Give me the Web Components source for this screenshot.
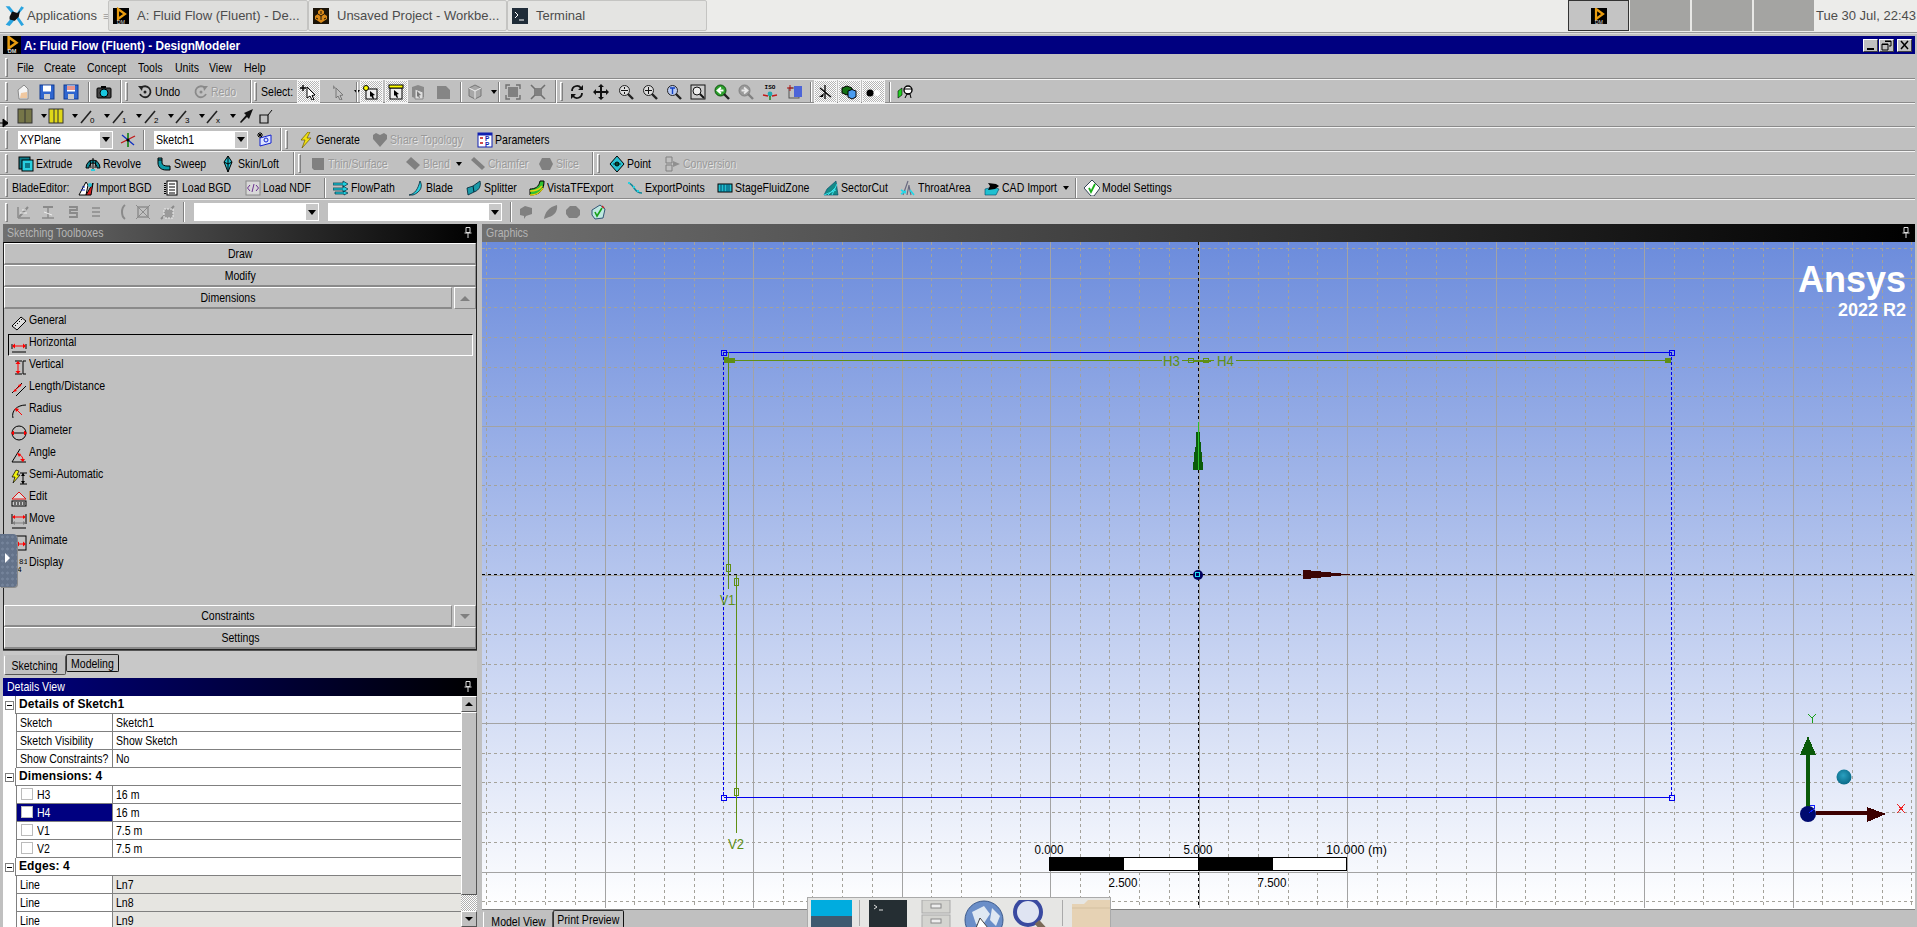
<!DOCTYPE html>
<html>
<head>
<meta charset="utf-8">
<title>DesignModeler</title>
<style>
html, body { margin: 0; height: 927px; overflow: hidden; background: #c0c0c0; }
body {
    position: relative;
    display: flex;
    flex-direction: column;
    font: 13px "Liberation Sans", sans-serif;
    color: #000;
}
</style>
</head>
<body>

<desk-panel>
    <task-button w="200" i="dm" active>A: Fluid Flow (Fluent) - De...</task-button>
    <task-button w="199" i="wb">Unsaved Project - Workbe...</task-button>
    <task-button w="200" i="term">Terminal</task-button>
</desk-panel>

<app-title>A: Fluid Flow (Fluent) - DesignModeler</app-title>

<tool-bar h="26">
    <tool-grip at="5"></tool-grip>
    <tool-item at="17">File</tool-item>
    <tool-item at="44">Create</tool-item>
    <tool-item at="87">Concept</tool-item>
    <tool-item at="138">Tools</tool-item>
    <tool-item at="175">Units</tool-item>
    <tool-item at="209">View</tool-item>
    <tool-item at="244">Help</tool-item>
</tool-bar>

<tool-bar>
    <tool-grip at="5"></tool-grip>
    <tool-item at="15" i="new"></tool-item>
    <tool-item at="39" i="save"></tool-item>
    <tool-item at="63" i="saveas"></tool-item>
    <tool-sep at="88"></tool-sep>
    <tool-item at="96" i="camera"></tool-item>
    <tool-end at="120"></tool-end>
    <tool-grip at="125"></tool-grip>
    <tool-item at="137" i="undo">Undo</tool-item>
    <tool-item at="193" i="redo" dis>Redo</tool-item>
    <tool-end at="250"></tool-end>
    <tool-grip at="254"></tool-grip>
    <tool-item at="261">Select:</tool-item>
    <tool-item at="297" i="pick" on></tool-item>
    <tool-item at="330" i="pick2" arrow></tool-item>
    <tool-sep at="356"></tool-sep>
    <tool-item at="360" i="vert" on></tool-item>
    <tool-item at="385" i="edge" on></tool-item>
    <tool-item at="410" i="faceg"></tool-item>
    <tool-item at="435" i="solidg"></tool-item>
    <tool-sep at="460"></tool-sep>
    <tool-item at="467" i="cubeg" arrow></tool-item>
    <tool-sep at="498"></tool-sep>
    <tool-item at="505" i="fit1"></tool-item>
    <tool-item at="530" i="fit2"></tool-item>
    <tool-end at="555"></tool-end>
    <tool-grip at="560"></tool-grip>
    <tool-item at="569" i="rotate"></tool-item>
    <tool-item at="593" i="pan"></tool-item>
    <tool-item at="618" i="zoom"></tool-item>
    <tool-item at="642" i="zoomp"></tool-item>
    <tool-item at="666" i="zoomt"></tool-item>
    <tool-item at="690" i="zoomb"></tool-item>
    <tool-item at="714" i="zback"></tool-item>
    <tool-item at="738" i="zfwd"></tool-item>
    <tool-item at="762" i="iso"></tool-item>
    <tool-item at="787" i="clip"></tool-item>
    <tool-sep at="810"></tool-sep>
    <tool-item at="814" i="axes" on></tool-item>
    <tool-item at="838" i="boxes" on></tool-item>
    <tool-item at="862" i="dots" on></tool-item>
    <tool-sep at="889"></tool-sep>
    <tool-item at="897" i="head"></tool-item>
</tool-bar>

<tool-bar>
    <tool-grip at="5"></tool-grip>
    <tool-item at="17" i="boxg" arrow></tool-item>
    <tool-item at="48" i="boxy" arrow></tool-item>
    <tool-item at="80" i="l0" arrow></tool-item>
    <tool-item at="112" i="l1" arrow></tool-item>
    <tool-item at="144" i="l2" arrow></tool-item>
    <tool-item at="175" i="l3" arrow></tool-item>
    <tool-item at="206" i="lx" arrow></tool-item>
    <tool-item at="238" i="pointer"></tool-item>
    <tool-item at="258" i="corner"></tool-item>
</tool-bar>

<tool-bar>
    <tool-grip at="5"></tool-grip>
    <tool-combo at="18" w="95">XYPlane</tool-combo>
    <tool-item at="120" i="axesrgb"></tool-item>
    <tool-sep at="143"></tool-sep>
    <tool-combo at="154" w="94">Sketch1</tool-combo>
    <tool-item at="257" i="sketchnew"></tool-item>
    <tool-end at="280"></tool-end>
    <tool-grip at="285"></tool-grip>
    <tool-item at="298" i="bolt">Generate</tool-item>
    <tool-item at="372" i="heart" dis>Share Topology</tool-item>
    <tool-item at="477" i="params">Parameters</tool-item>
</tool-bar>

<tool-bar>
    <tool-grip at="5"></tool-grip>
    <tool-item at="18" i="extrude">Extrude</tool-item>
    <tool-item at="85" i="revolve">Revolve</tool-item>
    <tool-item at="156" i="sweep">Sweep</tool-item>
    <tool-item at="220" i="skin">Skin/Loft</tool-item>
    <tool-end at="293"></tool-end>
    <tool-grip at="298"></tool-grip>
    <tool-item at="310" i="thin" dis>Thin/Surface</tool-item>
    <tool-item at="405" i="blend" dis arrow>Blend</tool-item>
    <tool-item at="470" i="chamfer" dis>Chamfer</tool-item>
    <tool-item at="538" i="slice" dis>Slice</tool-item>
    <tool-end at="592"></tool-end>
    <tool-grip at="597"></tool-grip>
    <tool-item at="609" i="point">Point</tool-item>
    <tool-item at="665" i="conv" dis>Conversion</tool-item>
</tool-bar>

<tool-bar>
    <tool-grip at="5"></tool-grip>
    <tool-item at="12">BladeEditor:</tool-item>
    <tool-item at="78" i="importb">Import BGD</tool-item>
    <tool-item at="164" i="loadb">Load BGD</tool-item>
    <tool-item at="245" i="ndf">Load NDF</tool-item>
    <tool-sep at="324"></tool-sep>
    <tool-item at="333" i="flow">FlowPath</tool-item>
    <tool-item at="408" i="blade">Blade</tool-item>
    <tool-item at="466" i="split">Splitter</tool-item>
    <tool-item at="529" i="vista">VistaTFExport</tool-item>
    <tool-item at="627" i="export">ExportPoints</tool-item>
    <tool-item at="717" i="stage">StageFluidZone</tool-item>
    <tool-item at="823" i="sector">SectorCut</tool-item>
    <tool-item at="900" i="throat">ThroatArea</tool-item>
    <tool-item at="984" i="cad" arrow>CAD Import</tool-item>
    <tool-sep at="1075"></tool-sep>
    <tool-item at="1084" i="check">Model Settings</tool-item>
</tool-bar>

<tool-bar last>
    <tool-grip at="5"></tool-grip>
    <tool-item at="16" i="d1"></tool-item>
    <tool-item at="40" i="d2"></tool-item>
    <tool-item at="65" i="d3"></tool-item>
    <tool-item at="88" i="d4"></tool-item>
    <tool-item at="115" i="d5"></tool-item>
    <tool-item at="135" i="d6"></tool-item>
    <tool-item at="160" i="d7"></tool-item>
    <tool-sep at="183"></tool-sep>
    <tool-combo at="194" w="125"></tool-combo>
    <tool-combo at="328" w="174"></tool-combo>
    <tool-sep at="510"></tool-sep>
    <tool-item at="518" i="g1"></tool-item>
    <tool-item at="543" i="g2"></tool-item>
    <tool-item at="565" i="g3"></tool-item>
    <tool-item at="590" i="g4"></tool-item>
</tool-bar>

<work-area>
    <div slot="left">
        <dock-header>Sketching Toolboxes</dock-header>
        <sketch-box>
            <box-head>Draw</box-head>
            <box-head>Modify</box-head>
            <box-head side="up">Dimensions</box-head>
            <box-rows slot="rows">
                <box-row i="general">General</box-row>
                <box-row i="horizontal" selected>Horizontal</box-row>
                <box-row i="vertical">Vertical</box-row>
                <box-row i="length">Length/Distance</box-row>
                <box-row i="radius">Radius</box-row>
                <box-row i="diameter">Diameter</box-row>
                <box-row i="angle">Angle</box-row>
                <box-row i="semi">Semi-Automatic</box-row>
                <box-row i="edit">Edit</box-row>
                <box-row i="move">Move</box-row>
                <box-row i="animate">Animate</box-row>
                <box-row i="display">Display</box-row>
            </box-rows>
            <box-head slot="foot" side="down">Constraints</box-head>
            <box-head slot="foot">Settings</box-head>
        </sketch-box>
        <tab-strip>
            <tab-item active w="62">Sketching</tab-item>
            <tab-item w="53">Modeling</tab-item>
        </tab-strip>
        <details-view>
            <detail-row group>Details of Sketch1</detail-row>
            <detail-row name="Sketch">Sketch1</detail-row>
            <detail-row name="Sketch Visibility">Show Sketch</detail-row>
            <detail-row name="Show Constraints?">No</detail-row>
            <detail-row group>Dimensions: 4</detail-row>
            <detail-row name="H3" check>16 m</detail-row>
            <detail-row name="H4" check selected>16 m</detail-row>
            <detail-row name="V1" check>7.5 m</detail-row>
            <detail-row name="V2" check>7.5 m</detail-row>
            <detail-row group>Edges: 4</detail-row>
            <detail-row name="Line" locked>Ln7</detail-row>
            <detail-row name="Line" locked>Ln8</detail-row>
            <detail-row name="Line" locked>Ln9</detail-row>
        </details-view>
    </div>
    <div slot="right">
        <dock-header>Graphics</dock-header>
        <graphics-view></graphics-view>
        <tab-strip bottom>
            <tab-item active w="70">Model View</tab-item>
            <tab-item w="71">Print Preview</tab-item>
        </tab-strip>
    </div>
</work-area>

<side-handle></side-handle>
<cursor-mark></cursor-mark>
<float-dock></float-dock>

<script>
// icons are all 16x16 boxes, scaled by whoever places them
const ICONS = {
    dm: '<rect width="16" height="16" fill="#000"/><path d="M5 1l7 5-7 5z" fill="none" stroke="#e89c10" stroke-width="2.2"/><text x="8" y="15.5" font-size="5" fill="#ddd" text-anchor="middle" font-family="Liberation Sans">DM</text>',
    wb: '<rect width="16" height="16" fill="#1c1408"/><path d="M8 1l3 2v3l3 2v3l-3 2-3 2-3-2-3-2V8l3-2V3z" fill="#d98a1a"/><path d="M8 3v3M5 6l3 2 3-2M8 8v4M3 10l2 1M13 10l-2 1" stroke="#1c1408" fill="none"/>',
    term: '<rect width="16" height="16" fill="#1f2c38"/><path d="M3 4l3 3-3 3" stroke="#fff" fill="none"/><path d="M7 12h5" stroke="#fff"/>',
    xfce: '<path d="M2 1l6 7-6 7 3 1 5-6 4 6 2-1-5-7 5-6-2-1-4 6-5-6z" fill="#2aa4e0"/><path d="M5 9l2-4 4 1 2-2-1 5-3 3-4-1z" fill="#111"/>',
    new: '<path d="M3 6l6-5 4 4v10H4z" fill="#f4f4f4" stroke="#8a8a8a"/><path d="M6 9l6-1v6H5z" fill="#f0c8a0"/>',
    save: '<rect x="1" y="1" width="14" height="14" fill="#2f66d0" stroke="#123a90"/><rect x="4" y="1.5" width="8" height="6" fill="#fff"/><rect x="5" y="10" width="6" height="5" fill="#ccc"/>',
    saveas: '<rect x="1" y="1" width="14" height="14" fill="#2f66d0" stroke="#123a90"/><rect x="4" y="1.5" width="8" height="6" fill="#fff"/><path d="M4 3h8M4 5h8" stroke="#d03020"/><rect x="5" y="10" width="6" height="5" fill="#ccc"/>',
    camera: '<rect x="1" y="4" width="14" height="10" rx="1" fill="#444" stroke="#000"/><rect x="5" y="2" width="5" height="2" fill="#000"/><circle cx="8" cy="9" r="4" fill="#18c8e0" stroke="#000"/>',
    undo: '<path d="M4 4a5.5 5.5 0 1 1-1 6" fill="none" stroke="#222" stroke-width="1.8"/><path d="M1 2l5 0-1 5z" fill="#222"/><circle cx="8" cy="8" r="1.5" fill="#222"/>',
    redo: '<path d="M12 4a5.5 5.5 0 1 0 1 6" fill="none" stroke="#8a8a8a" stroke-width="1.8"/><path d="M15 2l-5 0 1 5z" fill="#8a8a8a"/><circle cx="8" cy="8" r="1.5" fill="#8a8a8a"/>',
    pick: '<path d="M7 3l8 8-3 .5 2 4-2 .5-2-4-3 2z" fill="#fff" stroke="#000"/><path d="M3 1v6M0 4h6" stroke="#000" stroke-width="1.4"/>',
    pick2: '<path d="M6 4l7 7-3 .5 2 4-2 .5-2-4-2 2z" fill="#c0c0c0" stroke="#777"/><path d="M3 1l3 3-3 1z" fill="#888"/>',
    vert: '<rect x="3" y="5" width="11" height="10" fill="#eee" stroke="#000"/><circle cx="3" cy="4" r="2.5" fill="#ff0" stroke="#000"/><path d="M7 7l5 4-2 .5 1 3-1 .5-2-3-1 1z" fill="#000"/>',
    edge: '<rect x="2" y="4" width="12" height="11" fill="#eee" stroke="#000"/><rect x="1" y="1" width="14" height="3" fill="#ff0" stroke="#000"/><path d="M6 6l5 4-2 .5 1 3-1 .5-2-3-1 1z" fill="#000"/>',
    faceg: '<path d="M2 3l6-2 6 2v10l-6 2-6-2z" fill="#8a8a8a"/><path d="M5 5l8 3v7H5z" fill="#ddd" stroke="#888"/><path d="M7 7l4 4-2 .5 1 2-1 .5-1-2-1 1z" fill="#777"/>',
    solidg: '<path d="M2 2h9l4 4v9H2z" fill="#858585"/>',
    cubeg: '<path d="M8 1l6 3v8l-6 3-6-3V4z" fill="#a8a8a8" stroke="#777"/><path d="M2 4l6 3 6-3M8 7v8" stroke="#eee" fill="none"/>',
    fit1: '<rect x="3" y="3" width="10" height="10" fill="#808080"/><path d="M1 5V1h4M11 1h4v4M15 11v4h-4M5 15H1v-4" fill="none" stroke="#707070" stroke-width="1.4"/>',
    fit2: '<rect x="4" y="4" width="8" height="8" fill="#808080"/><path d="M1 1l4 4M15 1l-4 4M1 15l4-4M15 15l-4-4" stroke="#707070" stroke-width="1.6"/>',
    rotate: '<path d="M3 7a5 5 0 0 1 9-3M13 9a5 5 0 0 1-9 3" fill="none" stroke="#111" stroke-width="1.8"/><path d="M14 1v5H9zM2 15v-5h5z" fill="#111"/>',
    pan: '<path d="M8 0l3 3H9v4h4V5l3 3-3 3V9H9v4h2l-3 3-3-3h2V9H3v2L0 8l3-3v2h4V3H5z" fill="#111"/>',
    zoom: '<circle cx="6.5" cy="6.5" r="5" fill="#ddd" stroke="#222"/><path d="M10 10l5 5" stroke="#222" stroke-width="2.4"/><path d="M6.5 3v2M6.5 8v2M3 6.5h7" stroke="#111"/>',
    zoomp: '<circle cx="6.5" cy="6.5" r="5" fill="#ddd" stroke="#222"/><path d="M10 10l5 5" stroke="#222" stroke-width="2.4"/><path d="M6.5 3v7M3 6.5h7" stroke="#111"/>',
    zoomt: '<circle cx="6.5" cy="6.5" r="5" fill="#b8c8f0" stroke="#222"/><path d="M10 10l5 5" stroke="#222" stroke-width="2.4"/><path d="M4 4h5M6.5 4v6" stroke="#1040c0" stroke-width="1.4"/>',
    zoomb: '<rect x="1" y="1" width="14" height="14" fill="#ccc" stroke="#111"/><circle cx="7" cy="7" r="4" fill="#eee" stroke="#111"/><path d="M10 10l4 4" stroke="#111" stroke-width="2"/>',
    zback: '<circle cx="6.5" cy="6.5" r="5.5" fill="#2ca02c" stroke="#0c500c"/><path d="M10 10l5 5" stroke="#222" stroke-width="2.4"/><path d="M9.5 6.5H5M7 3.5L3.5 6.5 7 9.5" stroke="#fff" stroke-width="1.8" fill="none"/>',
    zfwd: '<circle cx="6.5" cy="6.5" r="5.5" fill="#9a9a9a" stroke="#808080"/><path d="M10 10l5 5" stroke="#808080" stroke-width="2.4"/><path d="M3.5 6.5H8M6 3.5L9.5 6.5 6 9.5" stroke="#e8e8e8" stroke-width="1.8" fill="none"/>',
    iso: '<text x="8" y="5" font-size="6" font-weight="bold" text-anchor="middle" font-family="Liberation Mono">ISO</text><circle cx="8" cy="10" r="2.4" fill="#20a8b0"/><path d="M1 11l5 1M15 11l-5 1" stroke="#c01818" stroke-width="1.4"/><path d="M8 12v4" stroke="#108010" stroke-width="1.4"/>',
    clip: '<rect x="2" y="4" width="10" height="10" fill="none" stroke="#555"/><rect x="7" y="2" width="8" height="11" fill="#4c64d8"/><path d="M0 4h6M3 1v6" stroke="#b01010"/>',
    axes: '<path d="M8 1v14M3 4l11 9" stroke="#000" stroke-width="1.3"/><path d="M2 13l5-4-1 4z" fill="#000"/>',
    boxes: '<path d="M1 4l5-2 5 2v5l-5 2-5-2z" fill="#137013" stroke="#000"/><path d="M7 7l4-1.5 4 1.5v6l-4 2-4-2z" fill="#4a9cf0" stroke="#000"/>',
    dots: '<circle cx="5" cy="9" r="3.5" fill="#000"/><circle cx="12" cy="9" r="3" fill="#fff"/>',
    head: '<path d="M1 7l4-3v7l-4 3z" fill="#22d022" stroke="#000" stroke-width=".6"/><circle cx="11" cy="6" r="4" fill="#fff" stroke="#000" stroke-width="1.4"/><path d="M7 5h8M8 14l2-4h3l1 4" stroke="#000" fill="none"/>',
    boxg: '<rect x="1" y="1" width="14" height="14" fill="#767648" stroke="#333"/><path d="M8 1v14" stroke="#333"/>',
    boxy: '<rect x="1" y="1" width="14" height="14" fill="#e0d818" stroke="#333"/><path d="M6 1v14M10 1v14" stroke="#333"/>',
    l0: '<path d="M1 15L11 3" stroke="#222" stroke-width="1.6"/><text x="10" y="15" font-size="8" font-family="Liberation Sans">0</text>',
    l1: '<path d="M1 15L11 3" stroke="#222" stroke-width="1.6"/><text x="10" y="15" font-size="8" font-family="Liberation Sans">1</text>',
    l2: '<path d="M1 15L11 3" stroke="#222" stroke-width="1.6"/><text x="10" y="15" font-size="8" font-family="Liberation Sans">2</text>',
    l3: '<path d="M1 15L11 3" stroke="#222" stroke-width="1.6"/><text x="10" y="15" font-size="8" font-family="Liberation Sans">3</text>',
    lx: '<path d="M1 15L11 3" stroke="#222" stroke-width="1.6"/><text x="10" y="15" font-size="8" font-family="Liberation Sans">x</text>',
    pointer: '<path d="M15 1L6 5l2 2-6 7 1 1 6-6 2 2z" fill="#111"/>',
    corner: '<path d="M2 7h8v8H2z" fill="none" stroke="#111" stroke-width="1.2"/><path d="M10 7l4-5" stroke="#111"/>',
    axesrgb: '<path d="M8 1v14" stroke="#108010" stroke-width="1.6"/><path d="M1 11l14-7" stroke="#c01818" stroke-width="1.3"/><path d="M2 3l12 10" stroke="#1030c0" stroke-width="1.3"/><circle cx="8" cy="8" r="1.6" fill="#000"/>',
    sketchnew: '<path d="M3 6l11-3v8L3 14z" fill="#dde4ff" stroke="#1020d0"/><circle cx="9" cy="8" r="2" fill="none" stroke="#1020d0"/><path d="M3 0v6M0 3h6M1 1l4 4M5 1L1 5" stroke="#000"/>',
    bolt: '<path d="M10 0L3 8h4l-3 8 9-10H9l3-6z" fill="#f0e010" stroke="#6a5a00" stroke-width=".7"/>',
    heart: '<path d="M8 15L1 7V3l3-2 4 2 4-2 3 2v4z" fill="#808080"/>',
    params: '<rect x="1" y="1" width="14" height="14" fill="#fff" stroke="#1020b0"/><rect x="1" y="1" width="14" height="2.5" fill="#1020b0"/><path d="M3 6h3M3 11h3" stroke="#c01010" stroke-width="1.4"/><text x="8" y="9" font-size="6.5" font-weight="bold" fill="#1020b0" font-family="Liberation Sans">P</text><text x="8" y="14.5" font-size="6.5" font-weight="bold" fill="#1020b0" font-family="Liberation Sans">P</text>',
    extrude: '<rect x="1" y="1" width="11" height="12" fill="#0d7a88" stroke="#000"/><rect x="4" y="4" width="11" height="11" fill="#28d0e0" stroke="#000"/><rect x="7" y="7" width="5" height="5" fill="#0d7a88"/>',
    revolve: '<path d="M1 12a7 8 0 0 1 14 0h-3a4 5 0 0 0-8 0z" fill="#0d8a98" stroke="#000"/><path d="M8 2v12M5 4l1 8M11 4l-1 8" stroke="#000"/><path d="M6 13h4v2H6z" fill="#28d0e0"/>',
    sweep: '<path d="M2 2h4v5c0 2 3 3 5 3h3v4h-4C5 14 2 11 2 7z" fill="#0d9aa8" stroke="#000"/><path d="M2 4h4" stroke="#000"/>',
    skin: '<path d="M8 0l4 6-4 10-4-10z" fill="#20c0d0" stroke="#000"/><path d="M8 0v16M4 6l4 2 4-2" stroke="#000" fill="none"/>',
    thin: '<path d="M2 2h12v12H4l-2-2z" fill="#808080"/>',
    blend: '<path d="M1 6l5-5 9 8-5 5z" fill="#808080"/>',
    chamfer: '<path d="M1 4l3-3 11 10-3 3z" fill="#808080"/>',
    slice: '<path d="M4 2h8l3 6-3 6H4L1 8z" fill="#808080"/>',
    point: '<path d="M8 0l7 8-7 8-7-8z" fill="#28c0d0" stroke="#000"/><circle cx="8" cy="8" r="2" fill="#064" stroke="#000"/><path d="M4 8h8" stroke="#000" stroke-width=".6"/>',
    conv: '<path d="M1 1h6v6H1zM1 9h6v6H1z" fill="#c0c0c0" stroke="#808080"/><path d="M8 5l7 3-7 3z" fill="#909090"/>',
    importb: '<path d="M1 15L8 2l2 3-2 10z" fill="#fff" stroke="#000"/><path d="M8 15l7-12-2 12z" fill="#e02020" stroke="#000"/><path d="M3 10h4M4 7h3" stroke="#1030c0"/><circle cx="12" cy="5" r="2" fill="#28c0d0"/>',
    loadb: '<rect x="3" y="1" width="10" height="14" fill="#fff" stroke="#000"/><path d="M5 4h6M5 7h6M5 10h6M5 13h6" stroke="#000"/><path d="M1 3v11" stroke="#000" stroke-width="2" stroke-dasharray="1 1"/>',
    ndf: '<rect x="1" y="1" width="14" height="14" fill="#d8d8d8" stroke="#888"/><path d="M5 5L2.5 8 5 11M11 5l2.5 3L11 11M9 4l-2 8" stroke="#6a3090" fill="none"/>',
    flow: '<path d="M0 3h10V1l5 3-5 3V5H0zM0 8h10V6l5 3-5 3v-2H0zM2 12h9v-1l4 2-4 2v-1H2z" fill="#20d0e0" stroke="#003040" stroke-width=".7"/>',
    blade: '<path d="M1 15c6-1 9-6 11-14 3 5 1 11-7 14z" fill="#28d0e0" stroke="#023" stroke-width=".8"/>',
    split: '<path d="M1 8l6-2 7-5c1 4 0 9-6 11l-6 3z" fill="#1a9aa8" stroke="#023" stroke-width=".8"/><path d="M7 6l1 6" stroke="#023"/>',
    vista: '<path d="M1 15V9c5 0 9-2 10-8h4c0 8-3 14-14 14z" fill="#30c030" stroke="#000"/><path d="M1 11c5 0 9-1 12-5M1 15c6 0 10-2 13-7" stroke="#e8d010" stroke-width="1.4" fill="none"/>',
    export: '<path d="M1 3c3 0 4 2 6 5s4 5 8 5" fill="none" stroke="#108898" stroke-width="1.5"/><path d="M1 3h2M6 7h2M10 11h2" stroke="#28d0e0" stroke-width="2"/>',
    stage: '<rect x="1" y="4" width="14" height="8" fill="#20c0d0" stroke="#000"/><path d="M4 4v8M7 4v8M10 4v8M12 4v8" stroke="#046"/>',
    sector: '<path d="M1 15l3-6 9-8 2 14z" fill="#158a88" stroke="#046" stroke-width=".6"/><path d="M1 15l12-5M5 15l8-8M9 15l5-11" stroke="#3ae0e8"/>',
    throat: '<path d="M3 15L8 1M7 15l2-10M11 15L9 6" stroke="#6a6a80" stroke-width="1.2"/><path d="M1 14l5-3M14 15l-4-5M1 10l5 3" stroke="#20d8e8" stroke-width="1.6"/>',
    cad: '<path d="M1 15V9l8-2 6 2-3 6z" fill="#20c0d0" stroke="#046" stroke-width=".6"/><path d="M4 3l8 1 3 2-4 3-7 1 2-4z" fill="#000"/>',
    check: '<path d="M8 0l8 8-6 8H7L0 8z" fill="#fff" stroke="#345"/><path d="M5 8l2 4 4-8" stroke="#18b018" stroke-width="1.8" fill="none"/>',
    d1: '<path d="M2 14h12M2 3v11" stroke="#8a8a8a" stroke-width="1.5"/><path d="M3 13l9-10" stroke="#8a8a8a" stroke-width="2"/><path d="M6 6h4M4 9h7" stroke="#eee"/>',
    d2: '<path d="M2 14h12M8 2v12" stroke="#8a8a8a" stroke-width="1.5"/><path d="M3 3h10" stroke="#8a8a8a" stroke-width="2"/><path d="M4 8l8 3" stroke="#eee"/>',
    d3: '<path d="M4 3h8v3H5v3h7v4H4" fill="none" stroke="#8a8a8a" stroke-width="1.8"/>',
    d4: '<path d="M4 4h8M4 8h8M4 12h8" stroke="#8a8a8a" stroke-width="1.5"/>',
    d5: '<path d="M10 1C6 4 6 12 10 15" fill="none" stroke="#8a8a8a" stroke-width="2"/>',
    d6: '<rect x="3" y="3" width="10" height="10" fill="none" stroke="#8a8a8a" stroke-width="1.4"/><path d="M1 1l14 14M15 1L1 15" stroke="#8a8a8a"/>',
    d7: '<path d="M1 15L14 2" stroke="#8a8a8a" stroke-width="2"/><rect x="4" y="5" width="9" height="9" fill="#9a9a9a" stroke="#eee" stroke-dasharray="2 1"/>',
    g1: '<path d="M2 5l5-3 7 2v6l-6 2-2 3v-3l-4-1z" fill="#808080"/>',
    g2: '<path d="M1 15C2 8 6 3 14 1c1 6-3 11-8 12z" fill="#808080"/>',
    g3: '<path d="M5 2h6l4 4v5l-3 3H4l-3-4V6z" fill="#808080"/>',
    g4: '<path d="M2 6l8-5 5 4-2 9-8 1-3-4z" fill="#bfe8e0" stroke="#357"/><path d="M5 8l2 4 5-8" stroke="#18a018" stroke-width="1.6" fill="none"/><path d="M12 2l2 2" stroke="#c02020" stroke-width="1.5"/>',
    general: '<path d="M1 11l9-9 5 4-9 9z" fill="#ddd" stroke="#000"/><path d="M4 10l1 1M6 8l1 1M8 6l1 1M10 4l1 1" stroke="#000"/>',
    horizontal: '<path d="M1 7v5M15 7v5M1 15h14" stroke="#000"/><path d="M2 9h12" stroke="#f00"/><path d="M1 9l3-2.5v5zM15 9l-3-2.5v5z" fill="#f00"/>',
    vertical: '<path d="M4 2h7M4 15h7M12 2h3M12 15h3M12 2v13" stroke="#000"/><path d="M7 3v11" stroke="#f00"/><path d="M7 2l-2.5 3h5zM7 15l-2.5-3h5z" fill="#f00"/>',
    length: '<path d="M1 12l10-10M5 15l10-10" stroke="#000"/><path d="M3 10l7-6" stroke="#f00"/><path d="M2 11l4-1-2-2zM11 3l-4 1 2 2z" fill="#f00"/>',
    radius: '<path d="M2 15C0 8 6 2 15 2" fill="none" stroke="#000"/><path d="M11 12L5 6" stroke="#f00"/><path d="M4 5l4 1-3 3z" fill="#f00"/>',
    diameter: '<circle cx="8" cy="8" r="7" fill="none" stroke="#000"/><path d="M1 8h14" stroke="#000"/><path d="M0 8l3-2.5v5zM16 8l-3-2.5v5z" fill="#f00"/>',
    angle: '<path d="M1 15l8-13M1 15h14" stroke="#000"/><path d="M7 7c3 1 5 3 5 6" fill="none" stroke="#f00"/><path d="M6 6l4 1-2 3zM12 15l-3-3h5z" fill="#f00"/>',
    semi: '<path d="M5 1L1 8h3L2 14l7-8H6l2-4z" fill="#f0f010" stroke="#000" stroke-width=".7"/><path d="M9 4h7M9 15h7M12 4v11" stroke="#000"/><path d="M12 4l-2 3h4zM12 15l-2-3h4z" fill="#000"/>',
    edit: '<path d="M8 1l7 7H1z" fill="#ddd" stroke="#e01010"/><rect x="1" y="10" width="14" height="5" fill="#ccc" stroke="#000"/><path d="M4 11v3M7 11v3M10 11v3M13 11v3" stroke="#000"/>',
    move: '<path d="M1 1v10M15 1v10M1 15h14" stroke="#000"/><path d="M3 4h10" stroke="#f00"/><path d="M1 4l3-2v4zM15 4l-3-2v4z" fill="#f00"/><path d="M3 10h10" stroke="#808080"/><path d="M1 10l3-2v4zM15 10l-3-2v4z" fill="#808080"/>',
    animate: '<rect x="1" y="1" width="14" height="14" fill="none" stroke="#000"/><path d="M5 1v14" stroke="#000"/><path d="M6 9h8" stroke="#f00"/><path d="M5 9l3-2.5v5zM15 9l-3-2.5v5z" fill="#f00"/>',
    display: '<text x="8" y="7" font-size="7.5" text-anchor="middle" font-family="Liberation Mono">0.81</text><text x="6" y="15" font-size="8" text-anchor="middle" font-family="Liberation Mono">H4</text>'
};

function svgIcon(name, w, h) {
    return `<svg width="${w}" height="${h || w}" viewBox="0 0 16 16" style="display:block;flex:none">${ICONS[name] || ''}</svg>`;
}

// the old MS sans of the app is tall and thin, no installed font has that so squeeze Liberation
const NARROW = .81;
const narrowCss = `.n { display:inline-block; white-space:nowrap; transform:scaleX(${NARROW}); transform-origin:0 50%; }
    .n.mid { transform-origin:50% 50%; }`;

class Base extends HTMLElement {
    render(html) {
        if (!this.shadowRoot) this.attachShadow({mode: 'open'});
        this.shadowRoot.innerHTML = html;
    }
    // give back the room a squeezed label no longer uses, so what follows it sits close
    closeUp() {
        this.shadowRoot.querySelectorAll('.n').forEach(n => {
            n.style.marginRight = -(n.offsetWidth * (1 - NARROW)) + 'px';
        });
    }
}

class DeskPanel extends Base {
    connectedCallback() {
        this.render(`<style>
            :host { display:flex; flex:none; height:33px; box-sizing:border-box; background:#ececea; border-bottom:1px solid #9a9a9a;
                    font:13px "Liberation Sans",sans-serif; color:#4c4c4c; box-shadow:0 1px #ddd; }
            .apps { flex:none; width:108px; display:flex; align-items:center; padding-left:3px; box-sizing:border-box; gap:3px; height:31px; }
            .handle { color:#999; margin-left:3px; font-size:11px; }
            .tasks { display:flex; flex:none; height:31px; }
            .fill { flex:1; }
            .pager { display:flex; flex:none; height:31px; }
            .page { width:60px; background:#a4a4a2; border-right:2px solid #e8e8e6; }
            .page.on { width:61px; box-sizing:border-box; background:#c4c4c4; border:1px solid #333; display:flex; align-items:center; justify-content:center; margin-right:1px; }
            .page:nth-child(4) { border-right:0; }
            .clock { flex:none; width:103px; height:31px; display:flex; align-items:center; padding-left:2px; box-sizing:border-box; white-space:nowrap; font-size:13px; }
        </style>
        <div class="apps">${svgIcon('xfce', 21)}<span>Applications</span><span class="handle">&#8801;</span></div>
        <div class="tasks"><slot></slot></div>
        <div class="fill"></div>
        <div class="pager"><div class="page on">${svgIcon('dm', 16, 16)}</div><div class="page"></div><div class="page"></div><div class="page"></div></div>
        <div class="clock">Tue 30 Jul, 22:43</div>`);
    }
}

class TaskButton extends Base {
    connectedCallback() {
        const active = this.hasAttribute('active');
        this.render(`<style>
            :host { display:flex; align-items:center; box-sizing:border-box; height:31px; width:${this.getAttribute('w')}px; padding-left:4px; gap:8px;
                    background:${active ? '#dededc' : '#e4e4e2'}; border:1px solid #c4c4c2; border-radius:2px; white-space:nowrap; overflow:hidden; }
        </style>${svgIcon(this.getAttribute('i'), 16, 20)}<slot></slot>`);
    }
}

class AppTitle extends Base {
    connectedCallback() {
        this.render(`<style>
            :host { display:flex; align-items:center; flex:none; height:18px; margin:3px 2px 0 3px; background:#000080; color:#fff;
                    font-weight:bold; font-size:13px; gap:3px; }
            .t { display:inline-block; white-space:nowrap; transform:scaleX(.91); transform-origin:0 50%; }
            .btns { margin-left:auto; display:flex; gap:1px; margin-right:3px; }
            .b { width:15px; height:13px; box-sizing:border-box; background:#c0c0c0; border:1px solid; border-color:#fff #404040 #404040 #fff; }
            svg { display:block; }
        </style>
        ${svgIcon('dm', 18, 18)}<span class="t"><slot></slot></span>
        <div class="btns">
            <div class="b"><svg width="13" height="11"><path d="M3 9h7" stroke="#000" stroke-width="2"/></svg></div>
            <div class="b"><svg width="13" height="11"><path d="M5 1h6v5H9M2 4h6v6H2z" fill="none" stroke="#000"/><path d="M5 1.5h6M2 4.5h6" stroke="#000"/></svg></div>
            <div class="b" style="margin-left:2px"><svg width="13" height="11"><path d="M3 1l7 8M10 1L3 9" stroke="#000" stroke-width="1.5"/></svg></div>
        </div>`);
    }
}

class ToolBar extends Base {
    connectedCallback() {
        const h = this.getAttribute('h') || 24;
        this.render(`<style>
            :host { display:flex; flex:none; align-items:center; height:${h}px; box-sizing:border-box; white-space:nowrap;
                    ${h == 26 ? 'padding-top:1px;' : ''}
                    ${this.hasAttribute('last') ? '' : 'border-bottom:1px solid #f4f4f4; box-shadow:inset 0 -1px #8a8a8a;'} margin-right:2px; }
        </style><slot></slot>`);
        // every child takes the room up to the next child's "at" value
        const kids = [...this.children];
        kids.forEach((k, n) => {
            const at = +k.getAttribute('at');
            if (n === 0) k.style.marginLeft = at + 'px';
            const next = kids[n + 1] ? +kids[n + 1].getAttribute('at') : at + 120;
            k.style.flex = `0 0 ${next - at}px`;
        });
    }
}

class ToolItem extends Base {
    connectedCallback() {
        const i = this.getAttribute('i');
        const dis = this.hasAttribute('dis');
        const on = this.hasAttribute('on');
        this.render(`<style>
            ${narrowCss}
            :host { display:flex; align-items:center; height:22px; box-sizing:border-box; min-width:0; color:${dis ? '#9a9a9a' : '#000'};
                    ${dis ? 'text-shadow:1px 1px #e6e6e6;' : ''} }
            .box { display:flex; align-items:center; justify-content:center; gap:2px; }
            .on { width:23px; height:23px; box-sizing:border-box; border:1px solid #f4f4f4; background:repeating-conic-gradient(#fff 0 25%,#b4b4b4 0 50%) 0 0/2px 2px; }
            .arrow { width:0; height:0; border:3px solid transparent; border-top:4px solid #000; border-bottom:0; margin-left:4px; flex:none; }
        </style>
        <div class="box ${on ? 'on' : ''}">${i ? svgIcon(i, 16) : ''}<span class="n"><slot></slot></span>${this.hasAttribute('arrow') ? '<span class="arrow"></span>' : ''}</div>`);
        this.closeUp();
    }
}

class ToolGrip extends Base {
    connectedCallback() {
        this.render(`<style>:host { display:block; height:19px; }
            div { width:3px; height:19px; box-sizing:border-box; border:1px solid; border-color:#fff #808080 #808080 #fff; }</style><div></div>`);
    }
}

class ToolSep extends Base {
    connectedCallback() {
        this.render(`<style>:host { display:block; height:20px; }
            div { width:2px; height:20px; border-left:1px solid #808080; border-right:1px solid #fff; box-sizing:border-box; }</style><div></div>`);
    }
}

class ToolEnd extends Base {
    connectedCallback() {
        this.render(`<style>:host { display:block; height:23px; }
            div { width:2px; height:23px; border-left:1px solid #808080; border-right:1px solid #fff; box-sizing:border-box; }</style><div></div>`);
    }
}

class ToolCombo extends Base {
    connectedCallback() {
        this.render(`<style>
            ${narrowCss}
            :host { display:block; }
            .c { display:flex; height:18px; background:#fff; width:${this.getAttribute('w')}px; box-sizing:border-box; align-items:center; padding-left:2px; }
            .t { flex:1; overflow:hidden; }
            .a { width:12px; height:16px; background:#c8c8c8; margin-right:1px; display:flex; align-items:center; justify-content:center; }
            .a i { border:4px solid transparent; border-top:5px solid #000; border-bottom:0; }
        </style><div class="c"><div class="t"><span class="n"><slot></slot></span></div><div class="a"><i></i></div></div>`);
    }
}

class WorkArea extends Base {
    connectedCallback() {
        this.render(`<style>
            :host { display:flex; flex:1; min-height:0; padding:0 2px 0 3px; gap:5px; }
            .l { flex:0 0 474px; min-width:0; display:flex; flex-direction:column; overflow:hidden; }
            .r { flex:1; min-width:0; display:flex; flex-direction:column; overflow:hidden; }
            ::slotted(div) { display:flex; flex-direction:column; flex:1; min-height:0; }
        </style><div class="l"><slot name="left"></slot></div><div class="r"><slot name="right"></slot></div>`);
    }
}

class DockHeader extends Base {
    connectedCallback() {
        const details = this.hasAttribute('navy');
        this.render(`<style>
            ${narrowCss}
            :host { display:flex; align-items:center; flex:none; height:18px; padding:0 5px 1px 4px; box-sizing:border-box; color:${details ? '#fff' : '#b4b4b4'};
                    background:linear-gradient(90deg,${details ? '#000080,#000' : '#707070,#000'}); }
            svg { margin-left:auto; display:block; }
        </style><span class="n"><slot></slot></span>
        <svg width="8" height="11"><path d="M2 .5h4v5H2zM.5 6h7M4 6v5" fill="none" stroke="#ddd"/></svg>`);
    }
}

class SketchBox extends Base {
    connectedCallback() {
        this.render(`<style>
            :host { display:flex; flex-direction:column; flex:none; height:408px; box-sizing:border-box; border:1px solid #222; border-top:1px solid #000; background:#c0c0c0; }
            .mid { flex:1; min-height:0; }
        </style><slot></slot><div class="mid"><slot name="rows"></slot></div><slot name="foot"></slot>`);
    }
}

class BoxHead extends Base {
    connectedCallback() {
        const side = this.getAttribute('side');
        this.render(`<style>
            ${narrowCss}
            :host { display:flex; flex:none; height:22px; box-sizing:border-box; }
            .t { flex:1; display:flex; align-items:center; justify-content:center; box-sizing:border-box; border:1px solid; border-color:#fff #8a8a8a #8a8a8a #fff; border-bottom-width:2px; }
            .s { width:22px; margin-left:2px; display:flex; align-items:center; justify-content:center; box-sizing:border-box; border:1px solid; border-color:#fff #8a8a8a #8a8a8a #fff; }
            .s i { border:5px solid transparent; ${side === 'up' ? 'border-bottom:5px solid #808080; border-top:0;' : 'border-top:5px solid #808080; border-bottom:0;'} }
        </style><div class="t"><span class="n mid"><slot></slot></span></div>${side ? '<div class="s"><i></i></div>' : ''}`);
    }
}

class BoxRows extends Base {
    connectedCallback() {
        this.render(`<style>:host { display:block; padding:3px 3px 0 4px; }</style><slot></slot>`);
    }
}

class BoxRow extends Base {
    connectedCallback() {
        const sel = this.hasAttribute('selected');
        this.render(`<style>
            ${narrowCss}
            :host { display:flex; height:22px; box-sizing:border-box; gap:2px; padding-left:${sel ? 2 : 3}px; line-height:16px;
                    ${sel ? 'border:1px solid; border-color:#000 #fff #fff #000;' : ''} }
            svg { margin-top:${sel ? 2 : 3}px; }
            .n { margin-top:${sel ? -1 : 0}px; height:16px; }
        </style>${svgIcon(this.getAttribute('i'), 16)}<span class="n"><slot></slot></span>`);
    }
}

class TabStrip extends Base {
    connectedCallback() {
        const bottom = this.hasAttribute('bottom');
        this.render(`<style>
            :host { display:flex; flex:none; height:${bottom ? 19 : 28}px; background:${bottom ? '#c0c0c0' : '#c8c8c8'}; box-sizing:border-box;
                    padding:${bottom ? 0 : 3}px 0 0 1px; ${bottom ? 'border-top:1px solid #808080;' : 'border-top:1px solid #555;'} align-items:flex-start; }
        </style><slot></slot>`);
    }
}

class TabItem extends Base {
    connectedCallback() {
        const active = this.hasAttribute('active');
        this.render(`<style>
            ${narrowCss}
            :host { display:flex; align-items:center; justify-content:center; box-sizing:border-box; width:${this.getAttribute('w')}px; height:${active ? 20 : 18}px; white-space:nowrap;
                    background:#c0c0c0; border:1px solid; border-radius:2px; ${active ? 'border-color:transparent #555 #555 #fff;' : 'border-color:#333 #111 #111 #333;'} margin-top:${active ? 1 : 0}px; }
        </style><span class="n mid"><slot></slot></span>`);
    }
}

class DetailsView extends Base {
    connectedCallback() {
        this.render(`<style>
            :host { display:flex; flex-direction:column; flex:1; min-height:0; }
            .body { display:flex; flex:1; min-height:0; background:#fff; overflow:hidden; }
            .rows { flex:1; min-width:0; }
            .bar { flex:0 0 16px; display:flex; flex-direction:column; background:#c0c0c0; }
            .btn { height:16px; flex:none; box-sizing:border-box; border:1px solid; border-color:#fff #555 #555 #fff; display:flex; align-items:center; justify-content:center; background:#c0c0c0; }
            .thumb { height:189px; box-sizing:border-box; border:1px solid; border-color:#fff #555 #555 #fff; background:#c0c0c0; }
            .track { height:16px; background:repeating-conic-gradient(#fff 0 25%,#b0b0b0 0 50%) 0 0/2px 2px; }
            .up { border:4px solid transparent; border-bottom:4px solid #000; border-top:0; }
            .down { border:4px solid transparent; border-top:4px solid #000; border-bottom:0; }
        </style>
        <dock-header navy>Details View</dock-header>
        <div class="body">
            <div class="rows"><slot></slot></div>
            <div class="bar">
                <div class="btn"><i class="up"></i></div>
                <div class="thumb"></div>
                <div class="track"></div>
                <div class="btn"><i class="down"></i></div>
            </div>
        </div>`);
    }
}

class DetailRow extends Base {
    connectedCallback() {
        const group = this.hasAttribute('group');
        const sel = this.hasAttribute('selected');
        const check = this.hasAttribute('check');
        const locked = this.hasAttribute('locked');
        if (group) {
            this.render(`<style>
                :host { display:flex; height:18px; box-sizing:border-box; font:bold 12px "Liberation Sans",sans-serif; letter-spacing:.1px; }
                .x { flex:0 0 13px; display:flex; align-items:center; justify-content:center; border-right:1px solid #808080; box-sizing:border-box; }
                .x i { display:block; width:9px; height:9px; box-sizing:border-box; border:1px solid #808080; position:relative; background:linear-gradient(#000,#000) center/5px 1px no-repeat; }
                .t { flex:1; display:flex; align-items:center; padding:0 0 1px 3px; border-bottom:1px solid #808080; }
            </style><div class="x"><i></i></div><div class="t"><slot></slot></div>`);
            return;
        }
        this.render(`<style>
            ${narrowCss}
            :host { display:flex; height:18px; box-sizing:border-box; padding-left:13px; }
            .a, .b { display:flex; align-items:center; box-sizing:border-box; border-bottom:1px solid #808080; border-left:1px solid #808080; white-space:nowrap; padding-bottom:1px; }
            .a { flex:0 0 96px; padding-left:${check ? 4 : 3}px; gap:4px; overflow:hidden; ${sel ? 'background:#000080;color:#fff;' : ''} }
            .b { flex:1; padding-left:3px; ${locked ? 'background:#e6e5e1;' : ''} }
            .c { width:12px; height:12px; box-sizing:border-box; border:1px solid #bbb; background:#fff; flex:none; }
        </style><div class="a">${check ? '<span class="c"></span>' : ''}<span class="n">${this.getAttribute('name')}</span></div><div class="b"><span class="n"><slot></slot></span></div>`);
    }
}

class GraphicsView extends Base {
    connectedCallback() {
        const cx = 1198.5, cy = 574.5, step = 29.7;
        let minor = '', major = '';
        for (let k = -24; k <= 24; k++) {
            const x = Math.round(cx + k * step) + .5;
            if (x < 482 || x > 1915) continue;
            if (k % 5 === 0) major += `M${x} 242V908`;
            else minor += `M${x} 242V908`;
        }
        for (let k = -12; k <= 12; k++) {
            const y = Math.round(cy + k * step) + .5;
            if (y < 242 || y > 908) continue;
            if (k % 5 === 0) major += `M482 ${y}H1915`;
            else minor += `M482 ${y}H1915`;
        }
        const green = '#5f8f14', blue = '#0000ee';
        const corner = (x, y) => `<rect x="${x - 2.5}" y="${y - 2.5}" width="5" height="5" fill="none" stroke="${blue}"/>`;
        this.render(`<style>
            :host { display:block; flex:none; height:667px; position:relative; }
            svg { display:block; width:100%; height:100%; }
            text { font-family:"Liberation Sans",sans-serif; }
            .logo { position:absolute; right:9px; top:17px; text-align:right; color:#fff; font-family:"Liberation Sans",sans-serif; font-weight:700; }
            .logo b { display:block; font-size:36px; line-height:normal; }
            .logo span { display:block; font-size:18px; line-height:normal; margin-top:-1px; }
        </style>
        <svg viewBox="482 242 1433 667" shape-rendering="crispEdges">
            <defs><linearGradient id="sky" x1="0" y1="0" x2="0" y2="1"><stop offset="0" stop-color="#6c8cdc"/><stop offset="1" stop-color="#fff"/></linearGradient>
            <radialGradient id="ball" cx=".45" cy=".4" r=".6"><stop offset="0" stop-color="#2aa0c0"/><stop offset="1" stop-color="#0a6a88"/></radialGradient></defs>
            <rect x="482" y="242" width="1433" height="667" fill="url(#sky)"/>
            <path d="${minor}" stroke="#a4a29a" stroke-dasharray="3 3" fill="none"/>
            <path d="${major}" stroke="#a3a3a3" fill="none"/>
            <path d="M1198.5 242V908M482 574.5H1915" stroke="#000" stroke-dasharray="3 3" fill="none"/>

            <path d="M724 352.5H1671M724 797.5H1671" stroke="${blue}" stroke-width="1.5" fill="none"/>
            <path d="M723.5 352V797M1671.5 352V797" stroke="${blue}" stroke-dasharray="3 2" fill="none"/>
            ${corner(723.5, 352.5)}${corner(723.5, 797.5)}${corner(1671.5, 352.5)}${corner(1671.5, 797.5)}
            <path d="M728.5 352V589M736.5 575V833" stroke="${green}" stroke-width="1.2" fill="none"/>
            <path d="M729 360.5H1162M1182 360.5H1214M1236 360.5H1671" stroke="${green}" stroke-width="1.2" fill="none"/>
            <path d="M1193 360.5H1211" stroke="${green}" stroke-width="2" fill="none"/>
            <path d="M724 357h5v6h-5zM729 358h6v5h-6zM1665 358h6v5h-6z" fill="${green}"/>
            <rect x="1188.5" y="358.5" width="5" height="4" fill="none" stroke="${green}"/><rect x="1203.5" y="358.5" width="5" height="4" fill="none" stroke="${green}"/>
            <path d="M726.5 564.5h4v7h-4zM734.5 578.5h4v7h-4zM734.5 788.5h4v7h-4z" fill="none" stroke="${green}"/>
            <g fill="${green}" font-size="15" shape-rendering="auto">
                <text x="1163" y="366" textLength="17" lengthAdjust="spacingAndGlyphs">H3</text><text x="1217" y="366" textLength="17" lengthAdjust="spacingAndGlyphs">H4</text>
                <text x="720" y="605" textLength="15" lengthAdjust="spacingAndGlyphs">V1</text><text x="728" y="849" textLength="16" lengthAdjust="spacingAndGlyphs">V2</text>
            </g>

            <path d="M1196 442v-10h4v10h1v10h1v10h1v8h-10v-8h1v-10h1z" fill="#0a5c0a"/>
            <path d="M1198.5 422V470" stroke="#2bc02b" fill="none"/>
            <path d="M1303 570h8v1h10v1h10v1h10v1h9v1h-9v1h-10v1h-10v1h-10v1h-8z" fill="#3c0505"/>
            <circle cx="1198" cy="575" r="5" fill="#000060" shape-rendering="auto"/>
            <rect x="1195.5" y="572.5" width="4" height="4" fill="none" stroke="#20e0f0"/>

            <rect x="1049" y="857" width="297" height="13" fill="#fff" stroke="#000" stroke-width="1"/>
            <rect x="1049" y="857" width="75" height="13" fill="#000"/><rect x="1198" y="857" width="75" height="13" fill="#000"/>
            <g fill="#000" font-size="13" text-anchor="middle" shape-rendering="auto">
                <text x="1049" y="854" textLength="29" lengthAdjust="spacingAndGlyphs">0.000</text><text x="1198" y="854" textLength="29" lengthAdjust="spacingAndGlyphs">5.000</text>
                <text x="1123" y="887" textLength="29" lengthAdjust="spacingAndGlyphs">2.500</text><text x="1272" y="887" textLength="29" lengthAdjust="spacingAndGlyphs">7.500</text>
                <text x="1326" y="854" text-anchor="start" textLength="61" lengthAdjust="spacingAndGlyphs">10.000 (m)</text>
            </g>

            <path d="M1806 755h4v55h-4z" fill="#0a5a0a"/><path d="M1808 736l8 19h-16z" fill="#0a5a0a"/>
            <path d="M1816 811h51v4h-51z" fill="#3c0000"/><path d="M1867 807l19 7-19 8z" fill="#3c0000"/>
            <circle cx="1808" cy="814" r="8" fill="#000a70" shape-rendering="auto"/>
            <path d="M1810 805h4v4l-5 4" stroke="#1020ff" fill="none"/>
            <circle cx="1844" cy="777" r="7.5" fill="url(#ball)" shape-rendering="auto"/>
            <path d="M1808 714l4 4 4-4M1812 718v5" stroke="#18a018" fill="none"/>
            <path d="M1897 804l8 9M1905 804l-8 9" stroke="#f02020" fill="none"/>
        </svg>
        <div class="logo"><b>Ansys</b><span>2022 R2</span></div>`);
    }
}

class SideHandle extends Base {
    connectedCallback() {
        this.render(`<style>
            :host { position:absolute; left:0; top:534px; width:17px; height:53px; background:#64738a; border-radius:0 4px 4px 0; box-shadow:1px 1px #8a8a8a;
                    background-image:radial-gradient(#74839a 1px,transparent 1.5px); background-size:5px 6px; }
            i { position:absolute; left:5px; top:19px; border:5px solid transparent; border-left:5px solid #fff; border-right:0; }
        </style><i></i>`);
    }
}

class CursorMark extends Base {
    connectedCallback() {
        this.render(`<style>:host { position:absolute; left:0; top:118px; }
            svg { display:block; }</style><svg width="9" height="10"><path d="M0 5h6M3 1l5 4-5 4z" fill="#000" stroke="#000"/></svg>`);
    }
}

class FloatDock extends Base {
    connectedCallback() {
        this.render(`<style>
            :host { position:absolute; left:807px; top:897px; width:304px; height:30px; box-sizing:border-box; background:#e6e6e4; border:1px solid #aaa; border-bottom:0;
                    display:flex; align-items:flex-start; padding:2px 0 0 3px; overflow:hidden; }
            svg { display:block; flex:none; }
            .sep { width:1px; height:26px; background:#aaa; flex:none; }
        </style>
        <svg width="41" height="28" style="margin-right:7px"><rect width="41" height="16" fill="#00acdf"/><rect y="16" width="41" height="12" fill="#3e5a70"/></svg>
        <div class="sep"></div>
        <svg width="38" height="28" style="margin-left:9px"><rect width="38" height="40" fill="#252e33"/><path d="M5 5l3 2-3 2" stroke="#ddd" fill="none"/><path d="M10 10h4" stroke="#ddd"/></svg>
        <svg width="30" height="28" style="margin-left:14px"><rect x="1" width="28" height="13" fill="#d4d4d0" stroke="#aaa"/><rect x="1" y="15" width="28" height="13" fill="#d4d4d0" stroke="#aaa"/><rect x="10" y="4" width="10" height="4" fill="#eee" stroke="#888"/><rect x="10" y="19" width="10" height="4" fill="#eee" stroke="#888"/></svg>
        <svg width="40" height="28" style="margin-left:13px"><circle cx="20" cy="20" r="19" fill="#6a8ec8" stroke="#3c5a8c"/><path d="M8 12l12-6 6 8-8 12-6-2zM28 8l8 8-4 10-6-6z" fill="#dfe8f2"/><path d="M16 18l8 10H12z" fill="#fff" stroke="#444"/></svg>
        <svg width="44" height="28" style="margin-left:6px"><circle cx="18" cy="12" r="13" fill="#dfe4f2" stroke="#3a4aa0" stroke-width="4"/><path d="M27 22l11 12" stroke="#7a6a58" stroke-width="6"/></svg>
        <div class="sep" style="margin-left:8px"></div>
        <svg width="40" height="28" style="margin-left:9px"><path d="M0 4h12l4-4h24v28H0z" fill="#e6d2b4"/><path d="M0 8h40" stroke="#d4c0a0"/></svg>`);
    }
}

customElements.define('desk-panel', DeskPanel);
customElements.define('task-button', TaskButton);
customElements.define('app-title', AppTitle);
customElements.define('tool-bar', ToolBar);
customElements.define('tool-item', ToolItem);
customElements.define('tool-grip', ToolGrip);
customElements.define('tool-sep', ToolSep);
customElements.define('tool-end', ToolEnd);
customElements.define('tool-combo', ToolCombo);
customElements.define('work-area', WorkArea);
customElements.define('dock-header', DockHeader);
customElements.define('sketch-box', SketchBox);
customElements.define('box-head', BoxHead);
customElements.define('box-rows', BoxRows);
customElements.define('box-row', BoxRow);
customElements.define('tab-strip', TabStrip);
customElements.define('tab-item', TabItem);
customElements.define('details-view', DetailsView);
customElements.define('detail-row', DetailRow);
customElements.define('graphics-view', GraphicsView);
customElements.define('side-handle', SideHandle);
customElements.define('cursor-mark', CursorMark);
customElements.define('float-dock', FloatDock);
</script>
</body>
</html>
